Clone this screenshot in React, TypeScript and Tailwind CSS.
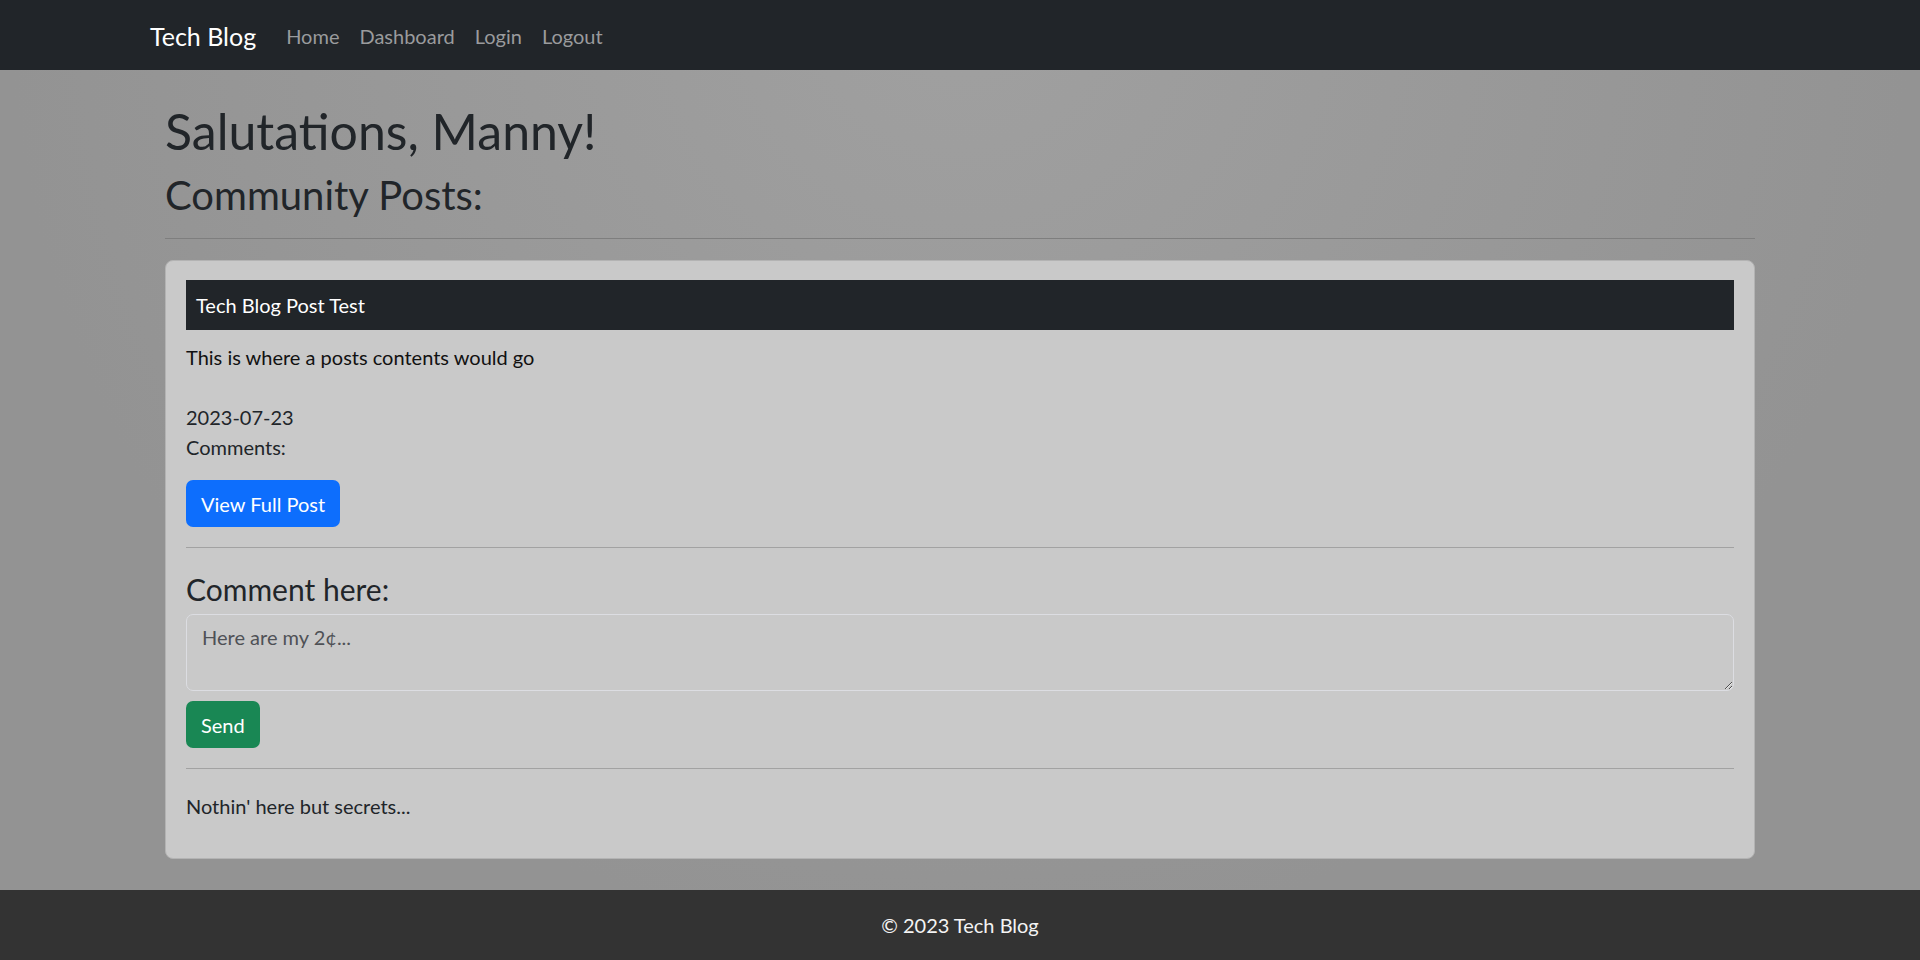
import React from 'react';

const font = { fontFamily: 'Lato, "Noto Sans", sans-serif' };

const NavBar = () => {
  return (
    <nav className="h-[70px] bg-[#212529]">
      <div className="w-[1650px] mx-auto px-[15px] pt-[2px] h-full flex items-center">
        <a className="text-white text-[25px] leading-[38px] mr-[20px]">Tech Blog</a>
        <ul className="flex items-center">
          {['Home', 'Dashboard', 'Login', 'Logout'].map((link) => (
            <li key={link} className="px-[10px] text-[20px] leading-[30px] text-[#9a9b9d]">
              {link}
            </li>
          ))}
        </ul>
      </div>
    </nav>
  );
};

const PostCard = () => {
  return (
    <article className="mt-[21px] bg-[#c9c9c9] border border-[#b3b3b3] rounded-[8px] px-[20px] pt-[19px] pb-[37px]">
      <h3 className="h-[50px] bg-[#212529] text-white text-[20px] leading-[50px] pl-[10px]">Tech Blog Post Test</h3>
      <div className="mt-[12px] text-[20px] leading-[30px]">
        <p className="text-[#111]">This is where a posts contents would go</p>
        <p className="mt-[30px] text-[#212529]">2023-07-23</p>
        <p className="text-[#212529]">Comments:</p>
      </div>
      <button className="mt-[18px] h-[47px] px-[15px] rounded-[7px] bg-[#0d6efd] text-white text-[20px] leading-[30px]">
        View Full Post
      </button>
      <hr className="mt-[20px] border-0 border-t border-[#a2a2a2]" />
      <h4 className="mt-[23px] text-[30px] leading-[36px] text-[#212529]">Comment here:</h4>
      <textarea
        placeholder="Here are my 2¢..."
        className="mt-[7px] block w-full h-[77px] bg-transparent border border-[#dcdde2] rounded-[7px] px-[15px] py-[7px] text-[20px] leading-[30px] placeholder:text-[#4f5156] outline-none"
        style={font}
      />
      <button className="mt-[10px] h-[47px] px-[15px] rounded-[7px] bg-[#198754] text-white text-[20px] leading-[30px]">
        Send
      </button>
      <hr className="mt-[20px] border-0 border-t border-[#a2a2a2]" />
      <p className="mt-[22px] text-[20px] leading-[30px] text-[#212529]">Nothin' here but secrets...</p>
    </article>
  );
};

const App = () => {
  return (
    <div className="min-h-screen flex flex-col bg-[radial-gradient(ellipse_at_top,#a0a0a0,#939393_70%)]" style={font}>
      <NavBar />
      <main className="flex-1 w-[1620px] mx-auto px-[15px] pt-[31px] pb-[30px]">
        <h1 className="text-[50px] leading-[60px] mb-[10px] text-[#212529]">Salutations, Manny!</h1>
        <h2 className="text-[40px] leading-[48px] text-[#212529]">Community Posts:</h2>
        <hr className="mt-[19px] border-0 border-t border-[#7e7e7e]" />
        <PostCard />
      </main>
      <footer className="h-[70px] bg-[#333333] flex items-center justify-center text-[20px] text-[#f4f4f4]">
        © 2023 Tech Blog
      </footer>
    </div>
  );
};

export default App;
